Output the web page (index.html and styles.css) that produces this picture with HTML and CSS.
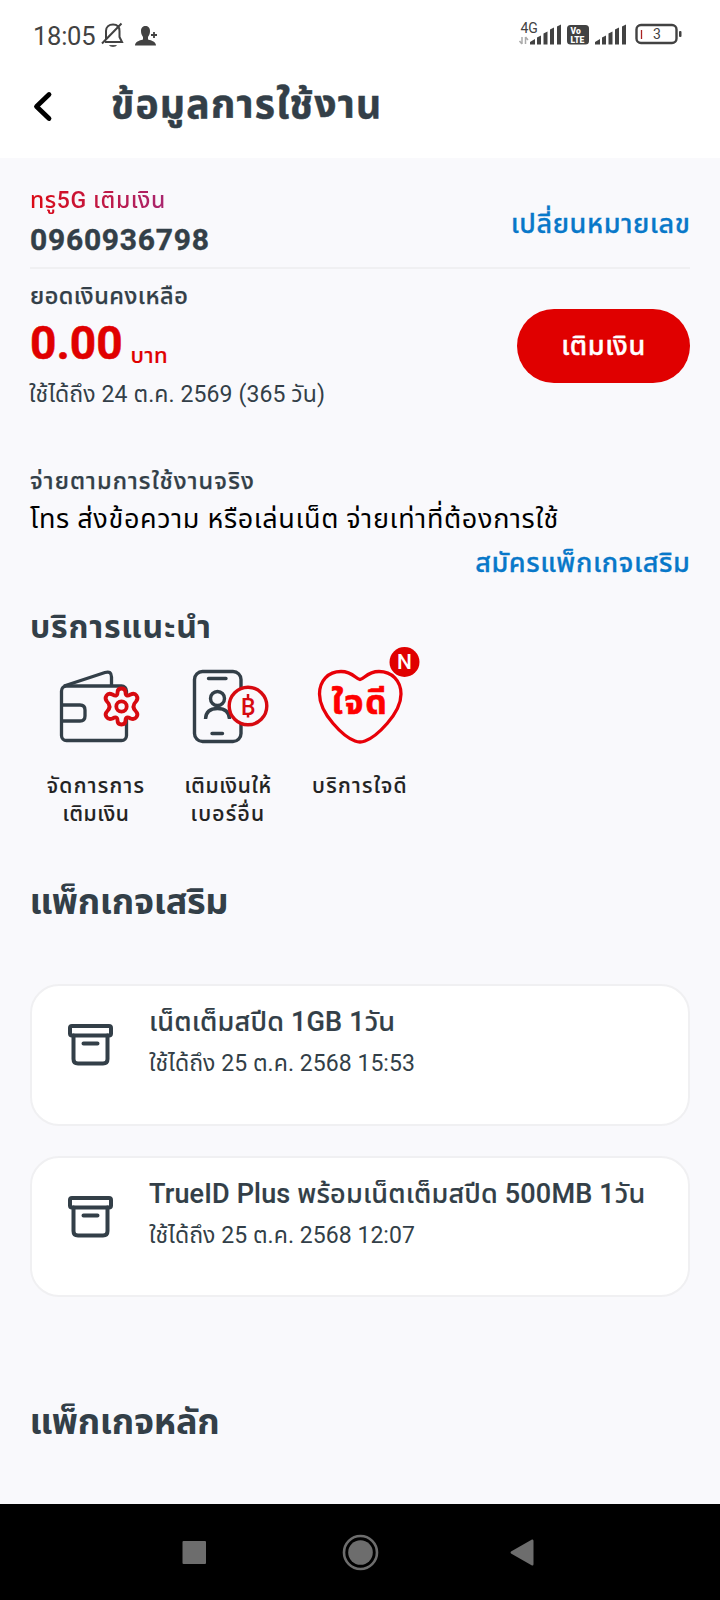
FILE: index.html
```html
<!DOCTYPE html>
<html lang="th">
<head>
<meta charset="utf-8">
<title>ข้อมูลการใช้งาน</title>
<link rel="stylesheet" href="styles.css">
</head>
<body>
<div class="screen">
  <header class="top">
    <div class="status">
      <span class="clock">18:05</span>
      <svg class="bell" width="24" height="26" viewBox="101 22 24 26" fill="none" stroke="#424242" stroke-width="2"><path d="M106 39V31C106 27 109 24.500 113 24.500S119.500 27 119.500 31V37L122 42H105M102 43.500 121.500 23.500"/><path d="M109 45H117C116 47.500 110 47.500 109 45Z" fill="#555" stroke="none"/></svg>
      <svg class="person" width="24" height="22" viewBox="134 24 24 22"><path fill="#424242" d="M141 31C141 27.500 143 26 145.500 26S150 27.500 150 31C150 34 149 35.500 148 37V39.500C152 40.500 156 42 156 45.500H135C135 42 139 40.500 143 39.500V37C142 35.500 141 34 141 31Z"/><path d="M151 35H157M154 32V38" stroke="#424242" stroke-width="1.800"/></svg>
      <svg class="signals" width="170" height="32" viewBox="516 18 170 32">
        <text class="net" x="520.500" y="33">4G</text>
        <path d="M522 37V44M519.500 41 522 44M525.500 44V37M525.500 37 528 40" stroke="#aaa" stroke-width="1.500" fill="none"/>
        <g fill="#424242"><path d="M530 44.500V42L535 39V44.500ZM537 44.500V37.500L541 35.500V44.500ZM543.500 44.500V33.500L547.500 31.500V44.500ZM550 44.500V29.500L554 27.500V44.500ZM557 44.500V26.500L561 24.500V44.500Z"/><path d="M595 44.500V42L600 39V44.500ZM602 44.500V37.500L606 35.500V44.500ZM608.500 44.500V33.500L612.500 31.500V44.500ZM615 44.500V29.500L619 27.500V44.500ZM622 44.500V26.500L626 24.500V44.500Z"/><rect x="567" y="25" width="22" height="19.500" rx="3.500"/></g>
        <text class="volte" x="570.500" y="34">Vo</text><text class="volte" x="570.500" y="42.500">LTE</text>
        <rect x="636.500" y="25" width="40" height="18" rx="4.500" fill="none" stroke="#424242" stroke-width="2.400"/>
        <path d="M641.500 30V39" stroke="#a22" stroke-width="1.300"/><rect x="679" y="31" width="2.500" height="6" rx="1" fill="#424242"/>
        <text class="pct" x="653" y="39">3</text>
      </svg>
    </div>
    <div class="bar">
      <svg width="20" height="32" viewBox="33 90 20 32" fill="none" stroke="#000" stroke-width="4.800" stroke-linecap="round" stroke-linejoin="round"><path d="M49 94.500 36.500 106.500 49 118.500"/></svg>
      <h1 class="title">ข้อมูลการใช้งาน</h1>
    </div>
  </header>

  <main class="content">
    <section class="account">
      <div><div class="small plan">ทรู5G เติมเงิน</div><div class="phone">0960936798</div></div>
      <a class="link change">เปลี่ยนหมายเลข</a>
    </section>
    <section class="balance">
      <div>
        <div class="small medium bal-label">ยอดเงินคงเหลือ</div>
        <div class="amount">0.00<span class="baht">บาท</span></div>
        <div class="small expiry">ใช้ได้ถึง 24 ต.ค. 2569 (365 วัน)</div>
      </div>
      <button class="topup">เติมเงิน</button>
    </section>
    <section class="payg">
      <div class="small medium pay-label">จ่ายตามการใช้งานจริง</div>
      <div class="desc">โทร ส่งข้อความ หรือเล่นเน็ต จ่ายเท่าที่ต้องการใช้</div>
      <a class="link addon">สมัครแพ็กเกจเสริม</a>
    </section>
    <h2 class="h-services">บริการแนะนำ</h2>
    <section class="services">
      <div class="service">
        <svg width="132" height="123" viewBox="30 649 132 123" fill="none" stroke="#333f48" stroke-width="3.300" stroke-linejoin="round">
          <rect x="61.500" y="686" width="65" height="54.500" rx="5"/><path d="M64 686 105 672.500Q111.500 670.500 111.500 677V686M61.500 705H80Q85 705 85 710V716Q85 721 80 721H61.500"/>
          <g stroke="#d70a10" stroke-width="3.800"><path fill="#f9f9fc" d="M117.500 692.500Q117.500 688.500 121.500 688.500T125.500 692.500Q125.500 697.500 130.500 694.500Q134.500 692.500 136.500 695.500T136 701.500Q131 706.500 136 711.500Q138.500 714 136.500 717T130.500 718.500Q125.500 715.500 125.500 720.500Q125.500 724.500 121.500 724.500T117.500 720.500Q117.500 715.500 112.500 718.500Q108.500 720 106.500 717T107 711.500Q112 706.500 107 701.500Q104.500 698.500 106.500 695.500T112.500 694.500Q117.500 697.500 117.500 692.500Z"/><circle cx="121.500" cy="706.500" r="5.200"/></g>
        </svg>
        <div class="label wide">จัดการการ</div><div class="label">เติมเงิน</div>
      </div>
      <div class="service">
        <svg width="132" height="123" viewBox="162 649 132 123" fill="none" stroke="#333f48" stroke-width="3.400">
          <rect x="194.500" y="671.500" width="46.500" height="70" rx="8"/><path d="M208.500 678.500H226M212 733.500H222.500" stroke-linecap="round"/><circle cx="217.500" cy="698.500" r="7"/><path d="M205.500 719Q206 708.500 217.500 708.500T229.500 719"/>
          <circle cx="248" cy="706" r="18.800" stroke="#d70a10" fill="#f9f9fc"/><path d="M248 694V699M248 713V717.500" stroke="#d70a10" stroke-width="2.500"/>
          <text class="coin" x="241" y="714.500">B</text>
        </svg>
        <div class="label">เติมเงินให้</div><div class="label wide">เบอร์อื่น</div>
      </div>
      <div class="service">
        <svg width="132" height="123" viewBox="294 649 132 123">
          <path fill="none" stroke="#e80008" stroke-width="3.300" stroke-linejoin="round" d="M360 679.500C356 679.500 353 671.500 341 671.500C328 671.500 319.500 681 319.500 694C319.500 714 344 737 355 741Q360 743 365 741C376 737 401 714 401 694C401 681 392 671.500 379 671.500C367 671.500 364 679.500 360 679.500Z"/>
          <text class="jaidee" x="331.500" y="713.500">ใจดี</text>
          <circle cx="404.500" cy="662" r="15" fill="#e00000"/><text class="new" x="404.500" y="669">N</text>
        </svg>
        <div class="label wide">บริการใจดี</div>
      </div>
    </section>
    <h2 class="h-addons">แพ็กเกจเสริม</h2>
    <section class="cards">
      <article class="card">
        <svg width="46" height="43" viewBox="0 0 46 43" fill="none" stroke="#333f48" stroke-width="4" stroke-linejoin="round"><rect x="2" y="2" width="41" height="9.500" rx="2"/><path d="M5.500 11.500V35Q5.500 39.500 10 39.500H35Q39.500 39.500 39.500 35V11.500M15.500 19.500H29.500" stroke-linecap="round"/></svg>
        <div><div class="pack">เน็ตเต็มสปีด 1GB 1วัน</div><div class="small">ใช้ได้ถึง 25 ต.ค. 2568 15:53</div></div>
      </article>
      <article class="card">
        <svg width="46" height="43" viewBox="0 0 46 43" fill="none" stroke="#333f48" stroke-width="4" stroke-linejoin="round"><rect x="2" y="2" width="41" height="9.500" rx="2"/><path d="M5.500 11.500V35Q5.500 39.500 10 39.500H35Q39.500 39.500 39.500 35V11.500M15.500 19.500H29.500" stroke-linecap="round"/></svg>
        <div><div class="pack">TrueID Plus พร้อมเน็ตเต็มสปีด 500MB 1วัน</div><div class="small">ใช้ได้ถึง 25 ต.ค. 2568 12:07</div></div>
      </article>
    </section>
    <h2 class="h-main">แพ็กเกจหลัก</h2>
  </main>

  <nav class="nav">
    <svg width="720" height="96" viewBox="0 1504 720 96" fill="#6d6d6d"><rect x="182.500" y="1541" width="23.500" height="23" rx="1"/><circle cx="360.500" cy="1552.500" r="12.300"/><circle cx="360.500" cy="1552.500" r="16.500" fill="none" stroke="#6d6d6d" stroke-width="2.600"/><path d="M511 1551.500 532 1539.500Q533.500 1539 533.500 1541V1564Q533.500 1566 532 1565.500L511 1553.500Q510 1552.500 511 1551.500Z"/></svg>
  </nav>
</div>
</body>
</html>
```
FILE: styles.css
```css
* { box-sizing: border-box; }
body { margin: 0; font-family: Roboto, "Noto Sans Thai", "Noto Sans", sans-serif; color: #333f48; }
h1, h2 { margin: 0; white-space: nowrap; }
svg { display: block; flex: none; overflow: visible; }
.screen { width: 720px; height: 1600px; display: flex; flex-direction: column; background: #f9f9fc; overflow: hidden; }
.top { height: 158px; background: #fff; flex: none; }
.status { height: 72px; display: flex; padding-left: 33px; color: #424242; }
.clock { width: 68px; font-size: 25.5px; line-height: 72px; letter-spacing: -0.25px; }
.bell { margin-top: 22px; }
.person { margin: 24px 0 0 9px; }
.signals { margin: 18px 0 0 358px; }
.net { font-size: 14px; fill: #424242; }
.volte { font-size: 8.5px; font-weight: 900; fill: #fff; }
.pct { font-size: 14px; fill: #424242; }
.bar { display: flex; padding: 18px 0 0 33px; }
.title { font-size: 39px; line-height: 50px; margin: -10px 0 0 58px; letter-spacing: 1.3px; -webkit-text-stroke: 0.5px #333f48; }
.content { flex: 1; padding: 0 30px; }
.account { display: flex; justify-content: space-between; height: 111px; padding-top: 26px; border-bottom: 2px solid #f0f0f2; }
.small { font-size: 23px; line-height: 34px; white-space: nowrap; }
.medium { font-weight: 500; -webkit-text-stroke: 0.25px #333f48; }
.plan { width: max-content; font-weight: 500; letter-spacing: 0.6px; background: linear-gradient(90deg, #dc0a14, #a8266f); background-clip: text; color: transparent; }
.phone { margin-top: 2px; font-size: 30px; line-height: 40px; font-weight: 700; letter-spacing: 0.75px; -webkit-text-stroke: 0.4px #333f48; }
.link { font-size: 27px; line-height: 40px; font-weight: 500; color: #0878c9; white-space: nowrap; letter-spacing: 0.6px; margin-right: -0.5px; -webkit-text-stroke: 0.3px #0878c9; }
.change { margin-top: 20px; }
.balance { display: flex; justify-content: space-between; height: 195px; padding-top: 10px; }
.bal-label { font-size: 23.5px; letter-spacing: 0.5px; }
.amount { margin-top: 5px; font-size: 46px; line-height: 50px; font-weight: 700; color: #e00000; -webkit-text-stroke: 0.5px #e00000; }
.baht { margin-left: 8px; font-size: 22px; font-weight: 500; letter-spacing: 0.4px; line-height: 20px; position: relative; top: 4px; -webkit-text-stroke: 0.2px #e00000; }
.expiry { margin-top: 10px; margin-left: -1px; letter-spacing: 0.1px; }
.topup { width: 173px; height: 74px; margin-top: 30px; padding: 0; border: 0; border-radius: 37px; background: #e00000; color: #fff; font: 500 27px/74px Roboto, "Noto Sans Thai", sans-serif; letter-spacing: 0.6px; -webkit-text-stroke: 0.4px #fff; }
.payg { display: flex; flex-direction: column; height: 141px; }
.pay-label { font-size: 23.5px; letter-spacing: 1.1px; }
.desc { margin-top: 1px; font-size: 27px; line-height: 40px; color: #000; white-space: nowrap; letter-spacing: 0.65px; }
.addon { margin-top: 4px; align-self: flex-end; }
.h-services { font-size: 32px; line-height: 44px; letter-spacing: 0.8px; }
.services { display: flex; height: 231px; }
.service { width: 132px; text-align: center; }
.label { font-size: 21px; line-height: 28px; font-weight: 500; color: #222; white-space: nowrap; letter-spacing: 0.65px; -webkit-text-stroke: 0.15px #222; }
.wide { letter-spacing: 1.3px; }
.coin { font-size: 23px; font-weight: 500; fill: #d70a10; stroke: none; }
.jaidee { font-size: 34px; font-weight: 700; fill: #ff0000; letter-spacing: 1.8px; stroke: #ff0000; stroke-width: 0.6px; }
.new { font-size: 21px; font-weight: 500; fill: #fff; text-anchor: middle; }
.h-addons, .h-main { font-size: 36px; line-height: 44px; letter-spacing: -0.3px; margin-left: -0.5px; }
.cards { display: grid; gap: 30px; padding: 60px 0 103px; }
.card { display: flex; gap: 35px; height: 141.500px; padding: 16px 0 0 36px; border: 2px solid #f0f0f2; border-radius: 29px; background: #fff; }
.card svg { margin-top: 22px; }
.pack { font-size: 27px; line-height: 40px; font-weight: 500; white-space: nowrap; letter-spacing: 0.17px; -webkit-text-stroke: 0.15px #333f48; }
.card .small { margin-top: 5px; letter-spacing: 0.05px; }
.nav { height: 96px; background: #000; flex: none; }
```
